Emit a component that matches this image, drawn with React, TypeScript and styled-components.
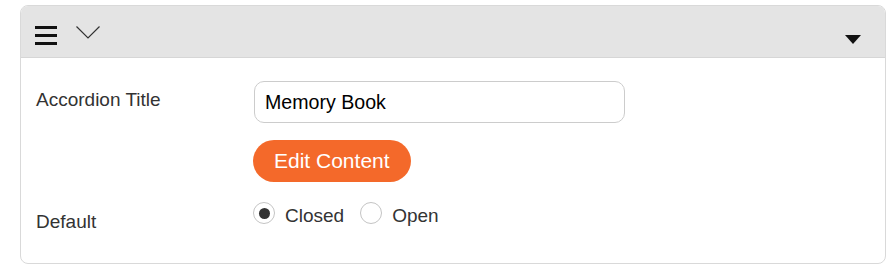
import React from "react";
import styled, { createGlobalStyle } from "styled-components";

const Global = createGlobalStyle`
  html, body { margin: 0; padding: 0; background: #fff; }
  body { font-family: "Liberation Sans", Arial, sans-serif; }
  * { box-sizing: border-box; }
`;

const Page = styled.div`
  padding: 5px 3px 0 20px;
`;

const Card = styled.section`
  border: 1px solid #d9d9d9;
  border-radius: 8px;
  overflow: hidden;
  background: #fff;
`;

const Header = styled.header`
  display: flex;
  align-items: flex-start;
  height: 52px;
  padding: 19px 24px 0 14px;
  background: #e4e4e4;
  border-bottom: 1px solid #d6d6d6;
`;

const IconSlot = styled.span<{ $ml?: number; $mt?: number }>`
  display: inline-flex;
  margin-left: ${(p) => p.$ml ?? 0}px;
  margin-top: ${(p) => p.$mt ?? 0}px;
`;

const Spacer = styled.span`
  flex: 1;
`;

const Body = styled.div`
  display: grid;
  grid-template-columns: 218px 1fr;
  padding: 23px 0 30px 15px;
`;

const Label = styled.div<{ $pt: number; $mt?: number }>`
  font-size: 19px;
  line-height: 23px;
  color: #333;
  padding-top: ${(p) => p.$pt}px;
  margin-top: ${(p) => p.$mt ?? 0}px;
`;

const Field = styled.div<{ $mt?: number }>`
  display: flex;
  flex-direction: column;
  align-items: flex-start;
  margin-top: ${(p) => p.$mt ?? 0}px;
`;

const TextInput = styled.input`
  width: 371px;
  height: 42px;
  border: 1px solid #cccccc;
  border-radius: 10px;
  padding: 0 10px;
  font-family: "Liberation Sans", Arial, sans-serif;
  font-size: 19.6px;
  color: #000;
  outline: none;
  background: #fff;
`;

const PillButton = styled.button`
  margin-top: 17px;
  margin-left: -1px;
  height: 42px;
  padding: 0 21px;
  border: none;
  border-radius: 21px;
  background: #f4692a;
  color: #fff;
  font-family: "Liberation Sans", Arial, sans-serif;
  font-size: 21px;
  cursor: pointer;
`;

const RadioGroup = styled.div`
  display: flex;
  align-items: flex-start;
  margin-left: -1px;
`;

const RadioOption = styled.label<{ $ml?: number }>`
  display: flex;
  align-items: flex-start;
  margin-left: ${(p) => p.$ml ?? 0}px;
  cursor: pointer;
`;

const Circle = styled.span<{ $checked: boolean }>`
  width: 22px;
  height: 22px;
  border-radius: 50%;
  border: 1px solid #c4c4c4;
  background: #fff;
  display: flex;
  align-items: center;
  justify-content: center;
  &::after {
    content: "";
    display: ${(p) => (p.$checked ? "block" : "none")};
    width: 11px;
    height: 11px;
    border-radius: 50%;
    background: #333;
  }
`;

const RadioText = styled.span`
  margin: 2px 0 0 10px;
  font-size: 19px;
  line-height: 23px;
  color: #333;
`;

export default function App() {
  const [state, setState] = React.useState<"closed" | "open">("closed");
  return (
    <>
      <Global />
      <Page>
        <Card>
          <Header>
            <IconSlot $mt={1}>
              <svg width="22" height="19" viewBox="0 0 22 19">
                <rect x="0" y="0" width="22" height="3" fill="#111" />
                <rect x="0" y="8" width="22" height="3" fill="#111" />
                <rect x="0" y="16" width="22" height="3" fill="#111" />
              </svg>
            </IconSlot>
            <IconSlot $ml={19} $mt={1}>
              <svg width="24" height="13" viewBox="0 0 24 13">
                <polyline
                  points="0.5,0.5 12,12 23.5,0.5"
                  fill="none"
                  stroke="#333"
                  strokeWidth="1.2"
                />
              </svg>
            </IconSlot>
            <Spacer />
            <IconSlot $mt={10}>
              <svg width="16" height="9" viewBox="0 0 16 9">
                <polygon points="0,0 16,0 8,9" fill="#111" />
              </svg>
            </IconSlot>
          </Header>
          <Body>
            <Label $pt={7}>Accordion Title</Label>
            <Field>
              <TextInput defaultValue="Memory Book" />
              <PillButton>Edit Content</PillButton>
            </Field>
            <Label $pt={8} $mt={20}>Default</Label>
            <Field $mt={20}>
              <RadioGroup>
                <RadioOption onClick={() => setState("closed")}>
                  <Circle $checked={state === "closed"} />
                  <RadioText>Closed</RadioText>
                </RadioOption>
                <RadioOption $ml={16} onClick={() => setState("open")}>
                  <Circle $checked={state === "open"} />
                  <RadioText>Open</RadioText>
                </RadioOption>
              </RadioGroup>
            </Field>
          </Body>
        </Card>
      </Page>
    </>
  );
}
